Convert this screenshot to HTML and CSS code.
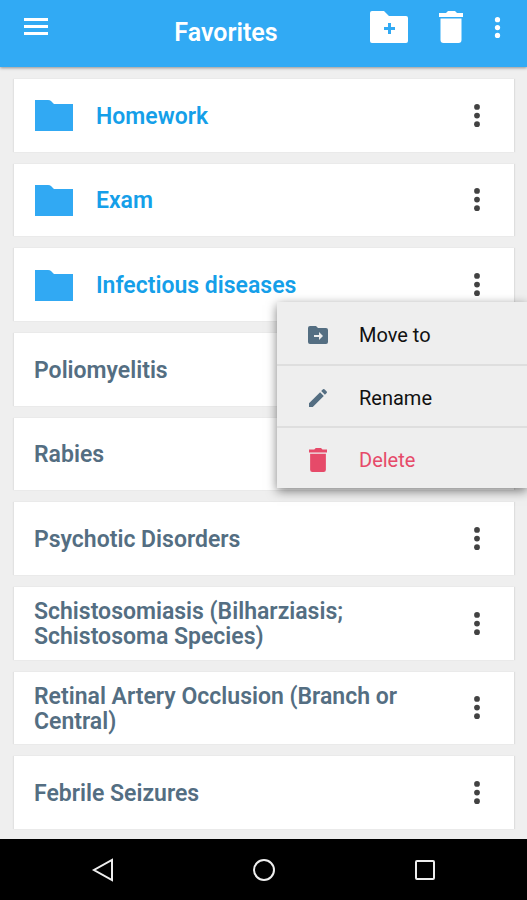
FILE: index.html
```html
<!DOCTYPE html>
<html lang="en">
<head>
    <meta charset="utf-8">
    <meta name="viewport" content="width=device-width, initial-scale=1">
    <title>Favorites</title>
    <link rel="stylesheet" href="styles.css">
</head>
<body>
    <!-- shared icons -->
    <svg class="icons" aria-hidden="true">
        <symbol id="dots" viewBox="0 0 8 24">
            <circle cx="4" cy="3" r="3"/><circle cx="4" cy="12" r="3"/><circle cx="4" cy="21" r="3"/>
        </symbol>
        <symbol id="folder" viewBox="0 0 38 32">
            <path d="M0 1h13q2 0 3 1l3 3h19v27H0z"/>
        </symbol>
        <symbol id="trash" viewBox="0 0 24 32">
            <path d="M0 2h7l2-2h7l2 2h6v4H0zM1.500 7.500h21V29q0 3-3 3h-15q-3 0-3-3z"/>
        </symbol>
    </svg>

    <header class="topbar">
        <button type="button" class="menu-btn" aria-label="Menu">
            <svg width="24" height="18" viewBox="0 0 24 18"><path d="M0 0h24v3H0zM0 7h24v3H0zM0 14h24v3H0z"/></svg>
        </button>
        <h1>Favorites</h1>
        <div class="actions">
            <button type="button" aria-label="New folder">
                <svg width="38" height="32" viewBox="0 0 38 32">
                    <path fill-rule="evenodd" d="M2 0h12l5 5h17q2 0 2 2v23q0 2-2 2H2q-2 0-2-2V2q0-2 2-2zM18 12v4h-4v3h4v4h3v-4h4v-3h-4v-4z"/>
                </svg>
            </button>
            <button type="button" aria-label="Delete favorites">
                <svg width="24" height="32"><use href="#trash"/></svg>
            </button>
            <button type="button" aria-label="More">
                <svg width="7" height="21"><use href="#dots"/></svg>
            </button>
        </div>
    </header>

    <main>
        <ul class="list">
            <li class="card folder">
                <svg class="folder-icon"><use href="#folder"/></svg>
                <a href="#">Homework</a>
                <button type="button" class="more" aria-label="More"><svg><use href="#dots"/></svg></button>
            </li>
            <li class="card folder">
                <svg class="folder-icon"><use href="#folder"/></svg>
                <a href="#">Exam</a>
                <button type="button" class="more" aria-label="More"><svg><use href="#dots"/></svg></button>
            </li>
            <li class="card folder">
                <svg class="folder-icon"><use href="#folder"/></svg>
                <a href="#">Infectious diseases</a>
                <button type="button" class="more" aria-label="More"><svg><use href="#dots"/></svg></button>
                <div class="popup">
                    <button type="button">
                        <svg viewBox="0 0 24 24"><path fill-rule="evenodd" d="M4 3h6l2 2h8q2 0 2 2v12q0 2-2 2H4q-2 0-2-2V5q0-2 2-2zM13 9v3H8v2h5v3l4-4z"/></svg>
                        Move to
                    </button>
                    <button type="button">
                        <svg viewBox="0 0 24 24"><path d="M3 17.250V21h3.750L17.800 9.900l-3.700-3.700zM20.700 7q.6-.7 0-1.400l-2.300-2.300q-.7-.6-1.400 0l-1.800 1.800 3.700 3.700z"/></svg>
                        Rename
                    </button>
                    <button type="button" class="delete">
                        <svg viewBox="0 0 24 32"><use href="#trash"/></svg>
                        Delete
                    </button>
                </div>
            </li>
            <li class="card">
                <a href="#">Poliomyelitis</a>
                <button type="button" class="more" aria-label="More"><svg><use href="#dots"/></svg></button>
            </li>
            <li class="card">
                <a href="#">Rabies</a>
                <button type="button" class="more" aria-label="More"><svg><use href="#dots"/></svg></button>
            </li>
            <li class="card">
                <a href="#">Psychotic Disorders</a>
                <button type="button" class="more" aria-label="More"><svg><use href="#dots"/></svg></button>
            </li>
            <li class="card">
                <a href="#">Schistosomiasis (Bilharziasis; Schistosoma Species)</a>
                <button type="button" class="more" aria-label="More"><svg><use href="#dots"/></svg></button>
            </li>
            <li class="card">
                <a href="#">Retinal Artery Occlusion (Branch or Central)</a>
                <button type="button" class="more" aria-label="More"><svg><use href="#dots"/></svg></button>
            </li>
            <li class="card">
                <a href="#">Febrile Seizures</a>
                <button type="button" class="more" aria-label="More"><svg><use href="#dots"/></svg></button>
            </li>
        </ul>
    </main>

    <nav class="navbar">
        <button type="button" aria-label="Back">
            <svg viewBox="0 0 24 24"><path d="M21 2v20L3 12z"/></svg>
        </button>
        <button type="button" aria-label="Home">
            <svg viewBox="0 0 24 24"><circle cx="12" cy="12" r="10"/></svg>
        </button>
        <button type="button" aria-label="Recent apps">
            <svg viewBox="0 0 24 24"><rect x="3" y="3" width="18" height="18" rx="1"/></svg>
        </button>
    </nav>
</body>
</html>
```
FILE: styles.css
```css
* {
    margin: 0;
    padding: 0;
    box-sizing: border-box;
}
body {
    min-height: 100vh;
    display: flex;
    flex-direction: column;
    background-color: #efefef;
    font-family: Roboto, sans-serif;
    overflow-x: hidden;
}
button {
    border: none;
    background: none;
    font: inherit;
    color: inherit;
    cursor: pointer;
}
svg {
    display: block;
    fill: currentColor;
}
.icons {
    position: absolute;
    width: 0;
    height: 0;
}

/* top bar */
.topbar {
    display: flex;
    align-items: center;
    height: 67px;
    padding: 0 26px 13px 24px;
    background-color: #31aaf4;
    color: white;
    box-shadow: 0 1px 3px rgba(0, 0, 0, 0.4);
}
.menu-btn {
    width: 58px;
}
.topbar h1 {
    flex: 1;
    padding-top: 10px;
    text-align: center;
    font-size: 25px;
    font-weight: 600;
}
.actions {
    display: flex;
    align-items: center;
    gap: 31px;
}

/* favorites */
main {
    flex: 1;
    display: flex;
    padding: 12px 13px 10px 14px;
}
.list {
    flex: 1;
    display: grid;
    grid-auto-rows: 1fr;
    gap: 12px;
    list-style: none;
}
.card {
    position: relative;
    display: flex;
    align-items: center;
    padding: 8px 29px 8px 20px;
    background-color: white;
    box-shadow: 1px 0 1px #dedede, -1px 0 1px #e2e2e2;
    color: #546e82;
}
.card a {
    flex: 1;
    padding-top: 2px;
    color: inherit;
    font-size: 23px;
    font-weight: 600;
    line-height: 25px;
    text-decoration: none;
}
.folder {
    padding-left: 21px;
}
.folder a {
    color: #159fe9;
}
.folder-icon {
    width: 38px;
    height: 32px;
    margin-right: 23px;
    color: #31a9f3;
}
.more {
    margin-left: 48px;
    color: #424242;
}
.more svg {
    width: 16px;
    height: 23px;
}

/* popup menu of a card */
.popup {
    position: absolute;
    z-index: 1;
    top: 54px;
    right: -13px;
    width: 250px;
    background-color: #eeeeee;
    box-shadow: 0 3px 10px rgba(0, 0, 0, 0.5);
}
.popup button {
    display: flex;
    align-items: center;
    gap: 29px;
    width: 100%;
    height: 62px;
    padding: 3px 0 0 29px;
    color: #111111;
    font-size: 20px;
}
.popup button + button {
    border-top: 2px solid #dedede;
}
.popup svg {
    width: 24px;
    height: 24px;
    color: #546e82;
}
.popup .delete,
.popup .delete svg {
    color: #e64a69;
}

/* android buttons */
.navbar {
    display: flex;
    justify-content: center;
    align-items: center;
    gap: 137px;
    height: 61px;
    background-color: black;
    color: #eeeeee;
}
.navbar svg {
    width: 24px;
    height: 24px;
    fill: none;
    stroke: currentColor;
    stroke-width: 2px;
}
```
